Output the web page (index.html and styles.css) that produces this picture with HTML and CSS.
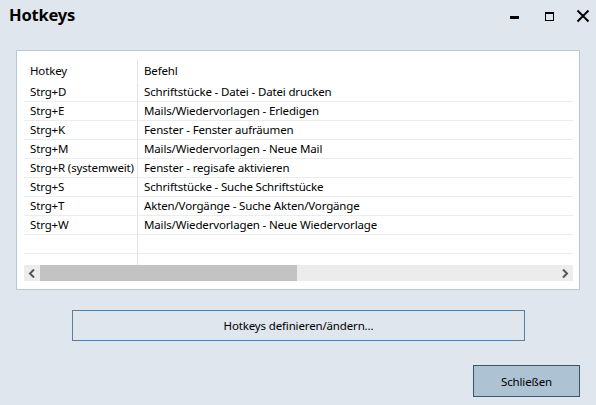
FILE: index.html
```html
<!DOCTYPE html>
<html>
<head>
<meta charset="utf-8">
<link rel="stylesheet" href="styles.css">
</head>
<body>
<div class="window">
  <div class="titlebar">
    <div class="title">Hotkeys</div>
    <div class="controls">
      <span class="ctl min"><svg width="12" height="12" viewBox="0 0 12 12"><rect x="1" y="6" width="9" height="3" fill="#000"/></svg></span>
      <span class="ctl max"><svg width="12" height="12" viewBox="0 0 12 12"><rect x="2.5" y="2.5" width="8" height="8" fill="none" stroke="#000" stroke-width="1"/><rect x="2" y="2" width="9" height="2" fill="#000"/></svg></span>
      <span class="ctl close"><svg width="14" height="14" viewBox="0 0 14 14"><path d="M1.5 1.5 L12.5 12.5 M12.5 1.5 L1.5 12.5" stroke="#000" stroke-width="2"/></svg></span>
    </div>
  </div>
  <div class="panel">
    <div class="grid">
      <div class="row head"><div class="c1">Hotkey</div><div class="c2">Befehl</div></div>
      <div class="row"><div class="c1">Strg+D</div><div class="c2">Schriftstücke - Datei - Datei drucken</div></div>
      <div class="row"><div class="c1">Strg+E</div><div class="c2">Mails/Wiedervorlagen - Erledigen</div></div>
      <div class="row"><div class="c1">Strg+K</div><div class="c2">Fenster - Fenster aufräumen</div></div>
      <div class="row"><div class="c1">Strg+M</div><div class="c2">Mails/Wiedervorlagen - Neue Mail</div></div>
      <div class="row"><div class="c1">Strg+R (systemweit)</div><div class="c2">Fenster - regisafe aktivieren</div></div>
      <div class="row"><div class="c1">Strg+S</div><div class="c2">Schriftstücke - Suche Schriftstücke</div></div>
      <div class="row"><div class="c1">Strg+T</div><div class="c2">Akten/Vorgänge - Suche Akten/Vorgänge</div></div>
      <div class="row"><div class="c1">Strg+W</div><div class="c2">Mails/Wiedervorlagen - Neue Wiedervorlage</div></div>
      <div class="row"><div class="c1"></div><div class="c2"></div></div>
      <div class="row tail"><div class="c1"></div><div class="c2"></div></div>
    </div>
    <div class="hscroll">
      <span class="arrow"><svg width="8" height="9" viewBox="0 0 8 9"><path d="M6 0.5 L2 4.5 L6 8.5" fill="none" stroke="#555" stroke-width="2"/></svg></span>
      <div class="track"><div class="thumb"></div></div>
      <span class="arrow"><svg width="8" height="9" viewBox="0 0 8 9"><path d="M2 0.5 L6 4.5 L2 8.5" fill="none" stroke="#555" stroke-width="2"/></svg></span>
    </div>
  </div>
  <div class="define-wrap"><button class="btn define">Hotkeys definieren/ändern...</button></div>
  <div class="footer"><button class="btn close-btn">Schließen</button></div>
</div>
</body>
</html>
```
FILE: styles.css
```css
* { box-sizing: border-box; }
html, body { margin: 0; padding: 0; }
body {
  width: 596px;
  height: 405px;
  background: #dfe6ee;
  font-family: "Noto Sans", "Open Sans", sans-serif;
  font-size: 11.5px;
  letter-spacing: -0.15px;
  color: #000;
  overflow: hidden;
}
.window { display: flex; flex-direction: column; height: 405px; }
.titlebar {
  height: 50px;
  display: flex;
  justify-content: space-between;
  align-items: flex-start;
}
.title {
  font-weight: bold;
  font-size: 16.5px;
  letter-spacing: -0.2px;
  padding: 3px 0 0 9px;
  line-height: 24px;
}
.controls { display: flex; padding-top: 8px; }
.ctl { display: flex; align-items: center; justify-content: center; height: 16px; }
.min { width: 12px; margin-right: 22px; }
.max { width: 12px; margin-right: 21px; }
.close { width: 14px; margin-right: 6px; }
.panel {
  margin: 0 16px 0 16px;
  height: 240px;
  background: #fff;
  border: 1px solid #b7c8d8;
  padding: 7px 6px 0 7px;
}
.grid { height: 207px; overflow: hidden; }
.row {
  display: flex;
  height: 19px;
  border-bottom: 1px solid #ececec;
  line-height: 18px;
}
.row.head { height: 25px; border-bottom: none; align-items: center; line-height: 24px; }
.row.tail { border-bottom: none; height: 14px; }
.c1 { width: 114px; padding-left: 6px; border-right: 1px solid #e4e4e4; white-space: nowrap; }
.c2 { padding-left: 6px; white-space: nowrap; }
.head .c1 { height: 23px; }
.hscroll {
  display: flex;
  align-items: center;
  height: 16px;
  background: #ececec;
}
.arrow { width: 16px; display: flex; justify-content: center; align-items: center; height: 16px; }
.track { flex: 1; height: 16px; }
.thumb { width: 257px; height: 16px; background: #c3c3c3; }
.define-wrap { padding: 20px 0 0 72px; }
.btn {
  font-family: inherit;
  font-size: 11.5px;
  letter-spacing: -0.15px;
  color: #000;
  cursor: default;
}
.define {
  width: 453px;
  height: 31px;
  background: #dfe6ee;
  border: 1px solid #5a7e9f;
}
.footer { display: flex; justify-content: flex-end; padding: 24px 16px 0 0; }
.close-btn {
  width: 107px;
  height: 32px;
  background: #adc2d3;
  border: 1px solid #3c5568;
}
```
